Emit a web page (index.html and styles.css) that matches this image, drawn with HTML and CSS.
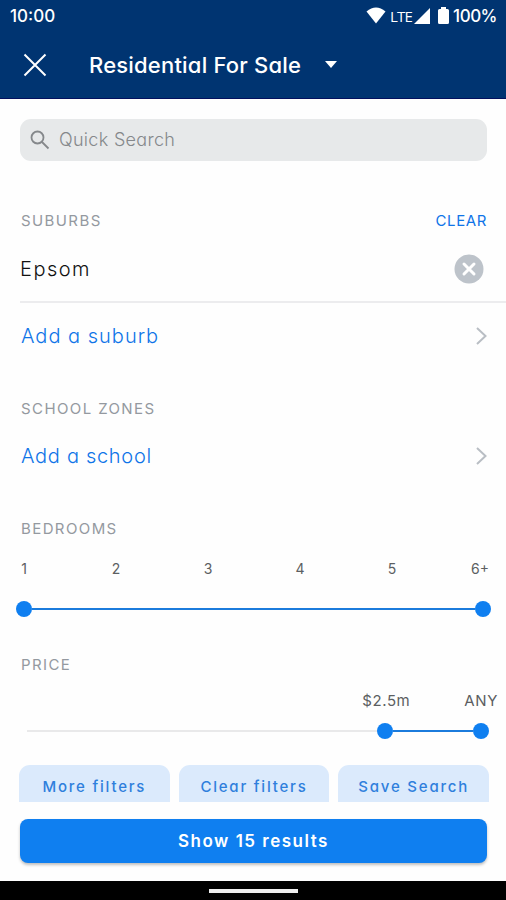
FILE: index.html
```
<!DOCTYPE html>
<html lang="en">

<head>
    <meta charset="utf-8" />
    <meta name="viewport" content="width=device-width, initial-scale=1.0" />
    <title>Residential For Sale</title>
    <link rel="stylesheet" href="styles.css">
</head>

<body>

    <header>
        <div class="status">
            <span class="time">10:00</span>
            <svg class="wifi" width="20" height="17" viewBox="0 0 20 17"><path d="M0.5 4.5Q10 -3.5 19.5 4.5L10 16.5Z" /></svg>
            <span class="lte">LTE</span>
            <svg class="signal" width="16" height="16" viewBox="0 0 16 16"><path d="M16 0V16H0Z" /></svg>
            <svg class="battery" width="11" height="17" viewBox="0 0 11 17"><path d="M3 0H8V2H9.5Q11 2 11 3.5V15.5Q11 17 9.5 17H1.5Q0 17 0 15.5V3.5Q0 2 1.5 2H3Z" /></svg>
            <span class="percent">100%</span>
        </div>
        <div class="toolbar">
            <svg class="close" width="24" height="24" viewBox="0 0 24 24"><path d="M1.5 1.5L22.5 22.5M22.5 1.5L1.5 22.5" /></svg>
            <h1>Residential For Sale</h1>
            <svg class="caret" width="12" height="7" viewBox="0 0 12 7"><path d="M0 0H12L6 7Z" /></svg>
        </div>
    </header>

    <main>
        <div class="search">
            <svg width="20" height="20" viewBox="0 0 20 20"><circle cx="7.5" cy="7.5" r="6" /><path d="M12 12L18.5 18.5" /></svg>
            <span>Quick Search</span>
        </div>

        <section class="suburbs">
            <div class="heading">
                <h2>SUBURBS</h2>
                <a class="clear">CLEAR</a>
            </div>
            <div class="row selected">
                <span>Epsom</span>
                <svg class="remove" width="30" height="30" viewBox="0 0 30 30"><circle cx="15" cy="15" r="14.5" /><path d="M10 10L20 20M20 10L10 20" /></svg>
            </div>
            <div class="row link">
                <span>Add a suburb</span>
                <svg class="chevron" width="12" height="18" viewBox="0 0 12 18"><path d="M2 1L10.5 9L2 17" /></svg>
            </div>
        </section>

        <section class="schools">
            <div class="heading">
                <h2>SCHOOL ZONES</h2>
            </div>
            <div class="row link">
                <span>Add a school</span>
                <svg class="chevron" width="12" height="18" viewBox="0 0 12 18"><path d="M2 1L10.5 9L2 17" /></svg>
            </div>
        </section>

        <section class="bedrooms">
            <div class="heading">
                <h2>BEDROOMS</h2>
            </div>
            <div class="scale">
                <span>1</span>
                <span>2</span>
                <span>3</span>
                <span>4</span>
                <span>5</span>
                <span class="last">6+</span>
            </div>
            <div class="slider">
                <i class="thumb"></i>
                <i class="range"></i>
                <i class="thumb"></i>
            </div>
        </section>

        <section class="price">
            <div class="heading">
                <h2>PRICE</h2>
            </div>
            <div class="values">
                <span class="min">$2.5m</span>
                <span>ANY</span>
            </div>
            <div class="slider">
                <i class="track"></i>
                <i class="thumb"></i>
                <i class="range"></i>
                <i class="thumb"></i>
            </div>
        </section>

        <div class="actions">
            <button>More filters</button>
            <button>Clear filters</button>
            <button>Save Search</button>
        </div>
        <button class="show">Show 15 results</button>
    </main>

    <footer>
        <div class="home"></div>
    </footer>

</body>

</html>
```
FILE: styles.css
```
* {
    box-sizing: border-box;
}

body {
    margin: 0;
    height: 900px;
    display: flex;
    flex-direction: column;
    overflow: hidden;
    background: #fefefe;
    font-family: Inter, "Open Sans", sans-serif;
    font-feature-settings: "cv11";
}

header {
    height: 99px;
    background: #003471;
    border-bottom: 1px solid #03105e;
    color: white;
}

header svg {
    fill: white;
}

.status {
    height: 31px;
    padding: 0 9px 0 10px;
    display: flex;
    align-items: center;
    font-size: 17px;
    font-weight: 500;
}

.time {
    margin-right: auto;
}

.percent {
    letter-spacing: -0.5px;
}

.lte {
    margin: 0 2px 0 4px;
    font-family: "Open Sans", sans-serif;
    font-size: 15px;
    letter-spacing: -0.8px;
}

.battery {
    margin: 0 4px 0 8px;
}

.toolbar {
    height: 67px;
    padding-left: 23px;
    display: flex;
    align-items: center;
}

.toolbar .close {
    fill: none;
    stroke: white;
    stroke-width: 2;
}

h1 {
    margin: 0 24px 0 42px;
    font-size: 22px;
    font-weight: 500;
    letter-spacing: 0.2px;
}

main {
    flex: 1;
    padding: 20px 19px 0 20px;
}

.search {
    height: 42px;
    padding: 0 0 1px 10px;
    display: flex;
    align-items: center;
    gap: 9px;
    border-radius: 11px;
    background: #e7e9ea;
    color: #85888b;
    font-size: 18px;
    font-weight: 300;
    letter-spacing: 0.3px;
}

.search svg {
    fill: none;
    stroke: #85888b;
    stroke-width: 1.8;
}

.heading {
    height: 32px;
    padding-left: 1px;
    display: flex;
    align-items: center;
    justify-content: space-between;
}

h2 {
    margin: 0;
    color: #9499a0;
    font-size: 15px;
    font-weight: 400;
    letter-spacing: 1.4px;
}

.clear {
    color: #0f74e8;
    font-size: 15px;
    letter-spacing: 0.6px;
}

.row {
    padding-left: 1px;
    display: flex;
    align-items: center;
    justify-content: space-between;
    font-size: 20px;
    font-weight: 300;
    letter-spacing: 1px;
}

.selected {
    height: 67px;
    margin-right: -19px;
    padding-right: 22px;
    padding-left: 0;
    border-bottom: 2px solid #ececee;
    color: #111;
    letter-spacing: 1.5px;
}

.remove {
    fill: #bdc3ca;
}

.remove path {
    stroke: white;
    stroke-width: 3;
    stroke-linecap: round;
}

.link {
    height: 66px;
    color: #0f74e8;
}

.chevron {
    fill: none;
    stroke: #b9bec4;
    stroke-width: 2;
}

.suburbs {
    margin-top: 43px;
}

.schools {
    margin-top: 23px;
}

.schools .link {
    height: 64px;
    letter-spacing: 0.7px;
}

.bedrooms {
    margin-top: 24px;
}

.scale {
    height: 20px;
    margin: 14px 3px 22px 4px;
    display: flex;
    align-items: center;
    justify-content: space-between;
    color: #5c5f62;
    font-size: 14px;
}

.scale span {
    width: 0;
    display: flex;
    justify-content: center;
}

.scale .last {
    margin-right: 4px;
    margin-left: -4px;
}

.slider {
    height: 16px;
    display: flex;
    align-items: center;
}

.bedrooms .slider {
    height: 18px;
    margin: 0 -4px;
}

.thumb {
    width: 16px;
    height: 16px;
    border-radius: 50%;
    background: #0f7ff0;
}

.range {
    flex: 1;
    height: 2px;
    background: #1b7bdc;
}

.price {
    margin-top: 30px;
}

.values {
    height: 20px;
    margin: 10px -11px 13px 0;
    display: flex;
    align-items: center;
    justify-content: flex-end;
    gap: 54px;
    color: #5c5f62;
    font-size: 15px;
    letter-spacing: 0.6px;
}

.price .slider {
    margin: 0 -2px 0 7px;
}

.price .range {
    flex: none;
    width: 80px;
}

.track {
    flex: 1;
    height: 2px;
    background: #e9e9ea;
}

button {
    border: 0;
    padding: 0;
    font-family: inherit;
    font-feature-settings: inherit;
}

.actions {
    height: 37px;
    margin: 26px -2px 17px -1px;
    display: grid;
    grid-template-columns: 1fr 1fr 1fr;
    gap: 9px;
}

.actions button {
    padding-top: 6px;
    border-radius: 11px 11px 0 0;
    background: #dbeafc;
    color: #2f7fdc;
    font-size: 15px;
    font-weight: 500;
    letter-spacing: 1.8px;
}

.show {
    width: 100%;
    height: 44px;
    border-radius: 8px;
    background: #0f7ff0;
    box-shadow: 0 2px 3px rgba(0, 0, 0, 0.25);
    color: white;
    font-size: 17px;
    font-weight: 600;
    letter-spacing: 1.5px;
}

footer {
    height: 19px;
    padding-top: 8px;
    background: black;
}

.home {
    width: 89px;
    height: 4px;
    margin: 0 auto;
    background: #eee;
}
```
